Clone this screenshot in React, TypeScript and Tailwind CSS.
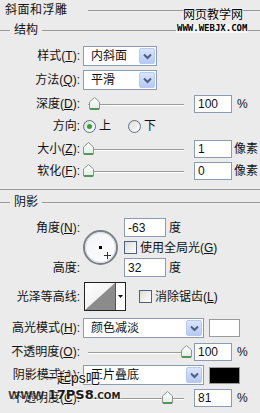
import type { ReactNode } from "react";

const FONT = "font-['Liberation_Sans','Noto_Sans_CJK_SC',sans-serif]";

function Chevron() {
  return (
    <div className="w-[16px] h-[16px] mr-[1px] rounded-[2px] border border-[#b7c9f2] bg-gradient-to-b from-[#dbe5fc] to-[#b5c9f5] flex items-center justify-center">
      <svg width="9" height="7" viewBox="0 0 9 7">
        <path d="M1 1.5 L4.5 5 L8 1.5" fill="none" stroke="#4d6185" strokeWidth="2" />
      </svg>
    </div>
  );
}

function Select({ value, width }: { value: string; width: string }) {
  return (
    <div
      className={`${width} h-[20px] border border-[#8a9cb4] bg-white flex items-center justify-between pl-[7px]`}
    >
      <span>{value}</span>
      <Chevron />
    </div>
  );
}

function Input({ value }: { value: string }) {
  return (
    <div className="w-[38px] h-[18px] border border-[#8a9cb4] bg-white pl-[3px] flex items-center leading-none">
      {value}
    </div>
  );
}

function Thumb() {
  return (
    <svg width="11" height="13" viewBox="0 0 11 13">
      <defs>
        <linearGradient id="tg" x1="0" y1="0" x2="0" y2="1">
          <stop offset="0" stopColor="#ffffff" />
          <stop offset="1" stopColor="#e4ece4" />
        </linearGradient>
      </defs>
      <path d="M0.5 5 L5.5 0.5 L10.5 5 L10.5 12 L0.5 12 Z" fill="url(#tg)" stroke="#8a968a" />
      <path d="M1 12 L10 12" stroke="#2f8a3a" strokeWidth="1.5" />
    </svg>
  );
}

// slider spans x 83..194, track 88..184; pos = thumb centre from slider start
function Slider({ pos }: { pos: number }) {
  return (
    <div className="relative w-[111px] h-[18px]">
      <div className="absolute left-[5px] top-[9px] w-[96px] h-[2px] border-t border-t-[#9c9c9c] border-b border-b-white" />
      <div className="absolute top-[2px]" style={{ left: pos - 5 }}>
        <Thumb />
      </div>
    </div>
  );
}

function Label({ children }: { children: ReactNode }) {
  return <div className="w-[80px] shrink-0 text-right whitespace-nowrap">{children}</div>;
}

function Check() {
  return (
    <div className="w-[13px] h-[13px] border border-[#4a6180] bg-gradient-to-br from-[#dcdcd6] to-white" />
  );
}

function Radio({ on }: { on?: boolean }) {
  return (
    <div className="w-[13px] h-[13px] rounded-full border border-[#5a6f8c] bg-gradient-to-br from-[#dcdcd6] to-white flex items-center justify-center">
      {on && <div className="w-[5px] h-[5px] rounded-full bg-[#2da23a]" />}
    </div>
  );
}

function Legend({ children }: { children: ReactNode }) {
  return (
    <div className="h-[20px] flex items-center">
      <div className="w-[10px] h-px bg-[#9a9a9a]" />
      <span className="px-[4px]">{children}</span>
      <div className="flex-1 h-px bg-[#9a9a9a]" />
    </div>
  );
}

export default function App() {
  return (
    <div
      className={`${FONT} relative w-[260px] h-[413px] overflow-hidden bg-[#ebebeb] text-[12px] text-[#111] leading-[14px]`}
    >
      {/* title */}
      <div className="h-[20px] flex items-center pl-[5px]">
        <span className="tracking-[0.5px]">斜面和浮雕</span>
        <div className="flex-1 ml-[20px] h-px bg-[#9a9a9a]" />
      </div>

      {/* 结构 */}
      <Legend>结构</Legend>

      <div className="mt-[6px] h-[20px] flex items-center">
        <Label>
          样式(<u>T</u>):
        </Label>
        <div className="ml-[3px]">
          <Select value="内斜面" width="w-[74px]" />
        </div>
      </div>

      <div className="mt-[4px] h-[20px] flex items-center">
        <Label>
          方法(<u>Q</u>):
        </Label>
        <div className="ml-[3px]">
          <Select value="平滑" width="w-[74px]" />
        </div>
      </div>

      <div className="mt-[5px] h-[18px] flex items-center">
        <Label>
          深度(<u>D</u>):
        </Label>
        <div className="ml-[3px]">
          <Slider pos={11} />
        </div>
        <Input value="100" />
        <span className="ml-[5px]">%</span>
      </div>

      <div className="mt-[5px] h-[16px] flex items-center">
        <Label>方向:</Label>
        <div className="ml-[3px] flex items-center gap-[3px]">
          <Radio on />
          <span>上</span>
        </div>
        <div className="ml-[17px] flex items-center gap-[3px]">
          <Radio />
          <span>下</span>
        </div>
      </div>

      <div className="mt-[6px] h-[18px] flex items-center">
        <Label>
          大小(<u>Z</u>):
        </Label>
        <div className="ml-[3px]">
          <Slider pos={5} />
        </div>
        <Input value="1" />
        <span className="ml-[2px]">像素</span>
      </div>

      <div className="mt-[4px] h-[18px] flex items-center">
        <Label>
          软化(<u>F</u>):
        </Label>
        <div className="ml-[3px]">
          <Slider pos={5} />
        </div>
        <Input value="0" />
        <span className="ml-[2px]">像素</span>
      </div>

      <div className="mt-[9px] h-px bg-[#9a9a9a]" />

      {/* 阴影 */}
      <div className="mt-[2px]">
        <Legend>阴影</Legend>
      </div>

      <div className="mt-[6px] h-[59px] flex items-center">
        <div className="w-[80px] h-full flex flex-col justify-between text-right">
          <div className="h-[19px] flex items-center justify-end">
            角度(<u>N</u>):
          </div>
          <div className="h-[19px] flex items-center justify-end">高度:</div>
        </div>
        <div className="ml-[3px] relative w-[35px] h-[35px] rounded-full border-2 border-[#7b7f88] bg-gradient-to-br from-[#f3f3f6] to-white flex items-center justify-center">
          <div className="absolute inset-0 rounded-full border border-[#d6d9e2]" />
          <div className="w-[3px] h-[3px] bg-black" />
          <svg className="absolute left-[19px] top-[20px]" width="7" height="7" viewBox="0 0 7 7">
            <path d="M3.5 0 V7 M0 3.5 H7" stroke="#333" strokeWidth="1" />
          </svg>
        </div>
        <div className="ml-[6px] h-full flex flex-col justify-between">
          <div className="h-[19px] flex items-center">
            <div className="w-[42px] h-[19px] border border-[#8a9cb4] bg-white pl-[3px] flex items-center">-63</div>
            <span className="ml-[3px]">度</span>
          </div>
          <div className="flex items-center gap-[3px]">
            <Check />
            <span>
              使用全局光(<u>G</u>)
            </span>
          </div>
          <div className="h-[19px] flex items-center">
            <div className="w-[42px] h-[19px] border border-[#8a9cb4] bg-white pl-[3px] flex items-center">32</div>
            <span className="ml-[3px]">度</span>
          </div>
        </div>
      </div>

      <div className="mt-[5px] h-[29px] flex items-center">
        <Label>光泽等高线:</Label>
        <div className="ml-[4px] w-[42px] h-[29px] border border-[#222] bg-white flex">
          <svg width="30" height="27" viewBox="0 0 30 27">
            <defs>
              <linearGradient id="cg" x1="0" y1="0" x2="1" y2="1">
                <stop offset="0" stopColor="#ffffff" />
                <stop offset="1" stopColor="#e8e8e8" />
              </linearGradient>
            </defs>
            <rect width="30" height="27" fill="url(#cg)" />
            <path d="M0 27 L30 0 L30 27 Z" fill="#8b8b8b" />
          </svg>
          <div className="w-px bg-[#555]" />
          <div className="flex-1 flex items-center justify-center">
            <svg width="5" height="3" viewBox="0 0 5 3">
              <path d="M0 0 H5 L2.5 3 Z" fill="#111" />
            </svg>
          </div>
        </div>
        <div className="ml-[13px] flex items-center gap-[3px]">
          <Check />
          <span>
            消除锯齿(<u>L</u>)
          </span>
        </div>
      </div>

      <div className="mt-[7px] h-[20px] flex items-center">
        <Label>
          高光模式(<u>H</u>):
        </Label>
        <div className="ml-[3px]">
          <Select value="颜色减淡" width="w-[121px]" />
        </div>
        <div className="ml-[5px] w-[31px] h-[18px] border border-[#9a9a9a] bg-white" />
      </div>

      <div className="mt-[4px] h-[19px] flex items-center">
        <Label>
          不透明度(<u>O</u>):
        </Label>
        <div className="ml-[3px]">
          <Slider pos={103} />
        </div>
        <Input value="100" />
        <span className="ml-[5px]">%</span>
      </div>

      <div className="mt-[4px] h-[20px] flex items-center">
        <Label>
          阴影模式(<u>A</u>):
        </Label>
        <div className="ml-[3px]">
          <Select value="正片叠底" width="w-[121px]" />
        </div>
        <div className="ml-[5px] w-[31px] h-[17px] border border-[#9a9a9a] bg-black" />
      </div>

      <div className="mt-[3px] h-[19px] flex items-center">
        <Label>
          不透明度(<u>C</u>):
        </Label>
        <div className="ml-[3px]">
          <Slider pos={84} />
        </div>
        <Input value="81" />
        <span className="ml-[5px]">%</span>
      </div>

      {/* watermarks */}
      <div className="absolute left-[183px] top-[8px] text-[12px] text-black [text-shadow:0_0_2px_#fff,0_0_2px_#fff]">
        网页教学网
      </div>
      <div className="absolute left-[176px] top-[24px] px-[1px] bg-[#f6f6f6] font-['DejaVu_Sans_Mono',monospace] font-bold text-[9px] leading-[9px] text-black">
        WWW.WEBJX.COM
      </div>
      <div className="absolute left-[43px] top-[369px] text-[14px] leading-[18px] text-[#111] [text-shadow:0_0_2px_#fff,0_0_2px_#fff,0_0_2px_#fff]">
        一起ps吧
      </div>
      <div className="absolute left-[8px] top-[388px] flex items-baseline font-['DejaVu_Sans',sans-serif] font-bold text-[#1a1a1a] [text-shadow:0_0_2px_#fff,0_0_2px_#fff]">
        <span className="text-[11px] leading-[14px] opacity-80">WWW.</span>
        <span className="text-[13px] leading-[14px]">17PS8</span>
        <span className="text-[9px] leading-[14px]">.COM</span>
      </div>
    </div>
  );
}
